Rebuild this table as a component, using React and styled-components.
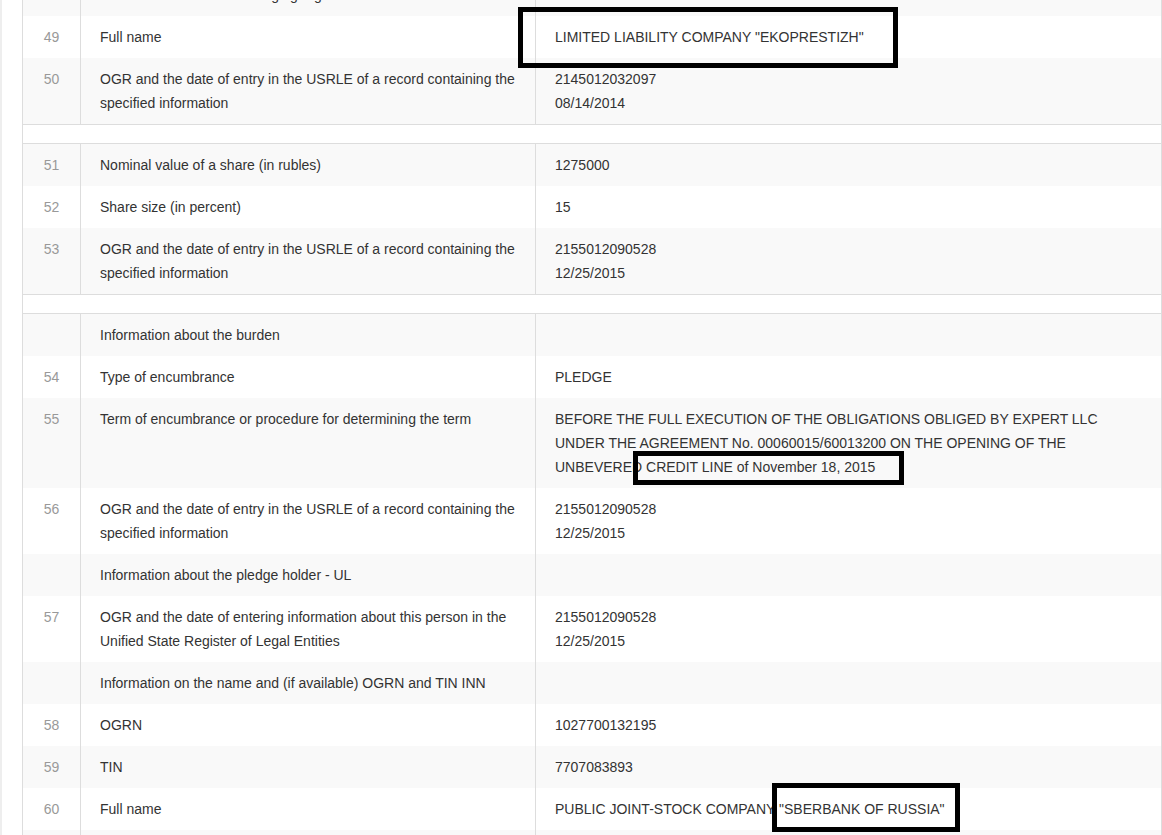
import React from 'react'
import styled, { createGlobalStyle } from 'styled-components'

const GlobalStyle = createGlobalStyle`
    html, body {
        margin: 0;
        padding: 0;
        background: #fff;
    }
    body {
        font-family: "Liberation Sans", Arial, sans-serif;
        font-size: 14px;
        color: #333;
    }
`

const Viewport = styled.div`
    position: relative;
    width: 1162px;
    height: 835px;
    overflow: hidden;
    box-sizing: border-box;
    border-left: 2px solid #eee;
    padding-left: 20px;
`
const Table = styled.table`
    width: 1140px;
    margin-top: -26px;
    border-collapse: collapse;
    table-layout: fixed;
    border-left: 1px solid #ddd;
    border-right: 1px solid #ddd;
`
const Section = styled.tbody`
    & > tr:nth-child(odd) {
        background: #f9f9f9;
    }
`
const Row = styled.tr``
const NumCell = styled.td`
    width: 57px;
    padding: 9px 0;
    line-height: 24px;
    text-align: center;
    vertical-align: top;
    color: #999;
    border-right: 1px solid #ddd;
`
const Cell = styled.td`
    padding: 9px 17px 9px 19px;
    line-height: 24px;
    vertical-align: top;
    border-right: ${p => (p.$last ? 'none' : '1px solid #ddd')};
    width: ${p => (p.$last ? 'auto' : '418px')};
`
const Spacer = styled.td`
    height: 18px;
    padding: 0;
    background: #fff;
    border-top: 1px solid #ddd;
    border-bottom: 1px solid #ddd;
`
const Highlight = styled.div`
    position: absolute;
    box-sizing: border-box;
    border: 5px solid #000;
    pointer-events: none;
`

const sections = [
    [
        ['', 'Information about the managing organization', ''],
        ['49', 'Full name', 'LIMITED LIABILITY COMPANY "EKOPRESTIZH"'],
        ['50', 'OGR and the date of entry in the USRLE of a record containing the specified information', ['2145012032097', '08/14/2014']],
    ],
    [
        ['51', 'Nominal value of a share (in rubles)', '1275000'],
        ['52', 'Share size (in percent)', '15'],
        ['53', 'OGR and the date of entry in the USRLE of a record containing the specified information', ['2155012090528', '12/25/2015']],
    ],
    [
        ['', 'Information about the burden', ''],
        ['54', 'Type of encumbrance', 'PLEDGE'],
        ['55', 'Term of encumbrance or procedure for determining the term', [
            'BEFORE THE FULL EXECUTION OF THE OBLIGATIONS OBLIGED BY EXPERT LLC',
            'UNDER THE AGREEMENT No. 00060015/60013200 ON THE OPENING OF THE',
            'UNBEVERED CREDIT LINE of November 18, 2015',
        ]],
        ['56', 'OGR and the date of entry in the USRLE of a record containing the specified information', ['2155012090528', '12/25/2015']],
        ['', 'Information about the pledge holder - UL', ''],
        ['57', 'OGR and the date of entering information about this person in the Unified State Register of Legal Entities', ['2155012090528', '12/25/2015']],
        ['', 'Information on the name and (if available) OGRN and TIN INN', ''],
        ['58', 'OGRN', '1027700132195'],
        ['59', 'TIN', '7707083893'],
        ['60', 'Full name', 'PUBLIC JOINT-STOCK COMPANY "SBERBANK OF RUSSIA"'],
        ['61', 'OGR and the date of entry in the USRLE of a record containing the specified information', ['1027700132195', '08/16/2002']],
    ],
]

const Value = ({ value }) => {
    if (!Array.isArray(value)) return value
    return value.map((line, i) => (
        <React.Fragment key={i}>
            {i > 0 && <br />}
            {line}
        </React.Fragment>
    ))
}

const App = () => {
    return (
        <>
            <GlobalStyle />
            <Viewport>
                <Table>
                    {sections.map((rows, s) => (
                        <React.Fragment key={s}>
                            {s > 0 && (
                                <tbody>
                                    <tr>
                                        <Spacer colSpan={3} />
                                    </tr>
                                </tbody>
                            )}
                            <Section>
                                {rows.map(([num, label, value], i) => (
                                    <Row key={i}>
                                        <NumCell>{num}</NumCell>
                                        <Cell>{label}</Cell>
                                        <Cell $last>
                                            <Value value={value} />
                                        </Cell>
                                    </Row>
                                ))}
                            </Section>
                        </React.Fragment>
                    ))}
                </Table>
                <Highlight style={{ left: 516, top: 7, width: 380, height: 61 }} />
                <Highlight style={{ left: 631, top: 451, width: 271, height: 34 }} />
                <Highlight style={{ left: 770, top: 783, width: 188, height: 49 }} />
            </Viewport>
        </>
    )
}

export default App
